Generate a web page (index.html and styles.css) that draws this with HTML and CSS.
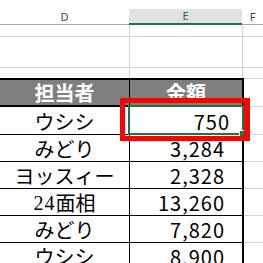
FILE: index.html
```html
<!DOCTYPE html>
<html lang="ja">
<head>
<meta charset="utf-8">
<link rel="stylesheet" href="styles.css">
</head>
<body>
<div class="sheet">
  <div class="topstrip"></div>
  <div class="grid colhead">
    <div class="c d">D</div>
    <div class="c e">E</div>
    <div class="c f">F</div>
  </div>
  <div class="grid plain ra">
    <div class="c d"></div><div class="c e"></div><div class="c f"></div>
  </div>
  <div class="grid plain rb">
    <div class="c d"></div><div class="c e"></div><div class="c f"></div>
  </div>
  <div class="grid plain rc">
    <div class="c d"></div><div class="c e"></div><div class="c f"></div>
  </div>
  <div class="tbl">
    <div class="trow th">
      <div class="c d">担当者</div><div class="c e">金額</div><div class="c f"></div>
    </div>
    <div class="trow td r1">
      <div class="c d">ウシシ</div><div class="c e num plainnum">750</div><div class="c f"></div>
    </div>
    <div class="trow td r2">
      <div class="c d">みどり</div><div class="c e num">3,284</div><div class="c f"></div>
    </div>
    <div class="trow td r3">
      <div class="c d">ヨッスィー</div><div class="c e num">2,328</div><div class="c f"></div>
    </div>
    <div class="trow td r4">
      <div class="c d"><span class="half">24</span>面相</div><div class="c e num">13,260</div><div class="c f"></div>
    </div>
    <div class="trow td r5">
      <div class="c d">みどり</div><div class="c e num">7,820</div><div class="c f"></div>
    </div>
    <div class="trow td r6">
      <div class="c d">ウシシ</div><div class="c e num">8,900</div><div class="c f"></div>
    </div>
  </div>
  <div class="selection"><span class="handle"></span></div>
  <div class="redbox"></div>
</div>
</body>
</html>
```
FILE: styles.css
```css
* { box-sizing: border-box; }
html, body { margin: 0; padding: 0; background: #ffffff; }
body { width: 263px; height: 263px; overflow: hidden; }
.sheet { position: relative; width: 263px; height: 263px; overflow: hidden; background: #fff; }
.topstrip { height: 9px; }
.grid { display: grid; grid-template-columns: 129px 113px 1fr; }
.colhead { height: 16px; font-family: "Noto Sans", "Liberation Sans", sans-serif; font-size: 11px; line-height: 14px; }
.colhead .c { display: flex; align-items: center; justify-content: center; color: #444; border-bottom: 1px solid #a6a6a6; }
.colhead .e { background: #e1e1e1; color: #217346; border-bottom: 2px solid #217346; }
.plain { grid-template-columns: 130px 113px 1fr; }
.plain .d, .plain .e { border-right: 1px solid #d4d4d4; }
.ra { height: 12px; }
.rb { height: 31px; }
.ra .c, .rb .c { border-bottom: 1px solid #d4d4d4; }
.rc { height: 10px; }
.trow { display: grid; grid-template-columns: 130px 114px 1fr; }
.trow .c { display: flex; justify-content: center; font-size: 20px; line-height: 20px; color: #000; font-family: "Noto Sans CJK JP", sans-serif; }
.trow .d { border-right: 1px solid #000; }
.trow .e { border-right: 2px solid #000; }
.th { height: 29px; }
.th .d, .th .e { background: #7f7f7f; border-top: 2px solid #000; border-bottom: 2px solid #000; color: #fff; font-weight: bold; align-items: center; }
.th .f { border-top: 1px solid #d4d4d4; border-bottom: 1px solid #d4d4d4; }
.td .c { align-items: flex-end; padding-bottom: 2px; }
.td .d, .td .e { border-bottom: 1px solid #000; }
.td .f { border-bottom: 1px solid #d4d4d4; }
.r1 { height: 28px; }
.r2, .r3, .r4, .r5, .r6 { height: 27px; }
.half { font-family: "Liberation Serif", serif; letter-spacing: 1px; }
.num { font-family: "Liberation Serif", serif; letter-spacing: 1px; justify-content: flex-end !important; padding-right: 17px; }
.plainnum { padding-right: 12px; }
.selection { position: absolute; left: 128px; top: 105px; width: 116px; height: 30px; border: 2px solid #217346; }
.handle { position: absolute; right: -3px; bottom: -3px; width: 6px; height: 6px; background: #217346; border-top: 1px solid #fff; border-left: 1px solid #fff; }
.redbox { position: absolute; left: 120px; top: 98px; width: 130px; height: 43px; border: 5px solid #ff0000; border-right-width: 6px; }
```
